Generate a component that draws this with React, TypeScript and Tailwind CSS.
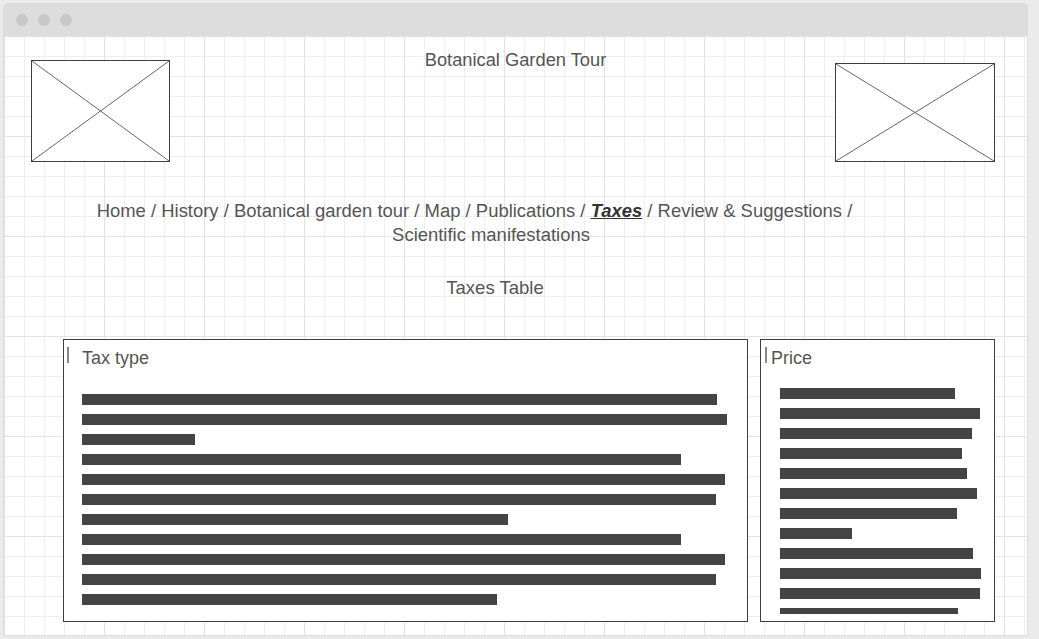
import React from "react";

const taxBars = [635, 645, 113, 599, 643, 634, 426, 599, 643, 634, 415];
const priceBars = [175, 200, 192, 182, 187, 197, 177, 72, 193, 201, 200, 178];

const Placeholder = ({ w, h }: { w: number; h: number }) => (
  <div className="border border-[#3f3f3f] bg-white" style={{ width: w, height: h }}>
    <svg width="100%" height="100%" viewBox="0 0 100 100" preserveAspectRatio="none">
      <line x1="0" y1="0" x2="100" y2="100" stroke="#666" strokeWidth="1" vectorEffect="non-scaling-stroke" />
      <line x1="100" y1="0" x2="0" y2="100" stroke="#666" strokeWidth="1" vectorEffect="non-scaling-stroke" />
    </svg>
  </div>
);

const App: React.FC = () => {
  return (
    <div className="min-h-screen bg-[#ebebeb] pl-[3px] pt-[3px] font-['Liberation_Sans',Arial,sans-serif] text-[18px] leading-[24px] text-[#555]">
      <div className="flex h-[633px] w-[1025px] flex-col rounded-t-[5px] bg-[#dddddd] px-px pb-px">
        {/* title bar */}
        <div className="flex h-[33px] shrink-0 items-center gap-[10px] pl-[12px]">
          <span className="h-[12px] w-[12px] rounded-full bg-[#c8c8c8]" />
          <span className="h-[12px] w-[12px] rounded-full bg-[#c8c8c8]" />
          <span className="h-[12px] w-[12px] rounded-full bg-[#c8c8c8]" />
        </div>

        {/* canvas */}
        <div className="flex flex-1 flex-col bg-white bg-[linear-gradient(to_right,#e3e3e3_1px,transparent_1px),linear-gradient(to_bottom,#e3e3e3_1px,transparent_1px),linear-gradient(to_right,#eeeeee_1px,transparent_1px),linear-gradient(to_bottom,#eeeeee_1px,transparent_1px)] bg-[size:100px_100px,100px_100px,20px_20px,20px_20px]">
          {/* header */}
          <div className="grid grid-cols-[1fr_auto_1fr] items-start pt-[12px]">
            <div className="ml-[27px] mt-[12px] justify-self-start">
              <Placeholder w={139} h={102} />
            </div>
            <div className="text-[18.3px] text-[#555]">Botanical Garden Tour</div>
            <div className="mr-[32px] mt-[15px] justify-self-end">
              <Placeholder w={160} h={99} />
            </div>
          </div>

          {/* navigation */}
          <div className="mt-[37px] flex flex-col items-center pr-[49px] text-[18.45px]">
            <div className="mr-[33px]">
              Home / History / Botanical garden tour / Map / Publications /{" "}
              <span className="font-bold italic text-[#333] underline">Taxes</span> / Review &amp; Suggestions /
            </div>
            <div>Scientific manifestations</div>
          </div>

          <div className="mt-[29px] flex justify-center pr-[41px] text-[18.5px]">Taxes Table</div>

          {/* tables */}
          <div className="mt-[39px] flex gap-[12px] pl-[59px]">
            <div className="h-[283px] w-[685px] border border-[#3f3f3f] bg-white pt-[6px]">
              <div className="flex items-start">
                <span className="ml-[3px] mt-px h-[16px] w-[2px] bg-[#888]" />
                <span className="ml-[13px]">Tax type</span>
              </div>
              <div className="mt-[24px] flex flex-col gap-[9px] pl-[18px]">
                {taxBars.map((w, i) => (
                  <div key={i} className="h-[11px] bg-[#444]" style={{ width: w }} />
                ))}
              </div>
            </div>

            <div className="h-[283px] w-[235px] border border-[#3f3f3f] bg-white pt-[6px]">
              <div className="flex items-start">
                <span className="ml-[4px] mt-px h-[16px] w-[2px] bg-[#888]" />
                <span className="ml-[4px]">Price</span>
              </div>
              <div className="mt-[18px] flex h-[226px] flex-col gap-[9px] overflow-hidden pl-[19px]">
                {priceBars.map((w, i) => (
                  <div key={i} className="h-[11px] shrink-0 bg-[#444]" style={{ width: w }} />
                ))}
              </div>
            </div>
          </div>
        </div>
      </div>
    </div>
  );
};

export default App;
